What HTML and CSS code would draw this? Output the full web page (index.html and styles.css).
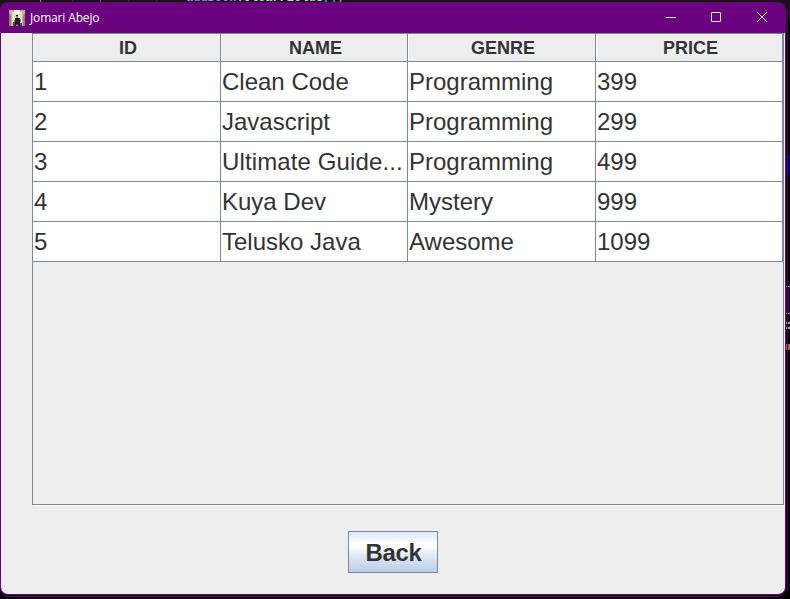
FILE: index.html
```html
<!DOCTYPE html>
<html lang="en">
<head>
<meta charset="utf-8">
<title>Jomari Abejo</title>
<link rel="stylesheet" href="styles.css">
</head>
<body>
<div class="backdrop">
  <div class="code-line"><span class="obj">addBook</span><span class="call">.clearFields</span><span class="paren">()</span><span class="semi">;</span></div>
  <i class="guide g1"></i><i class="guide g2"></i><i class="guide g3"></i><i class="guide g4"></i><i class="guide g5"></i>
</div>
<svg class="edge" width="5" height="599" viewBox="0 0 5 599" shape-rendering="crispEdges">
  <path fill="#000" d="M0 20h5v579H0z"/>
  <path fill="#00006b" d="M1 155h1v20H1zM3 155h2v20H3z"/>
  <path fill="#2a1038" d="M1 287h1v26H1zM3 287h2v26H3z"/>
  <path fill="#aaa" d="M1 286h1v1H1zM3 286h2v1H3zM1 313h1v1H1zM3 313h2v1H3zM1 322h1v2H1zM3 322h2v2H3zM1 327h1v2H1zM3 327h2v2H3z"/>
  <path fill="#b87018" d="M1 344h1v6H1zM3 344h2v6H3z"/>
  <path fill="#4a005a" d="M2 10h1v581H2z"/>
</svg>
<main class="window">
  <header class="titlebar">
    <svg class="app-icon" width="16" height="16" viewBox="0 0 16 16">
      <path fill="#c4b49c" d="M0 0h16v16H0z"/>
      <path fill="#e6dbc6" d="M3 2h10v11H3z"/>
      <path fill="#fff8e8" d="M5 0h6l-1 4H6z"/>
      <path fill="#94806a" d="M0 3l2 2v11H0zM15 4h1v12h-2V6z"/>
      <path fill="#a98468" d="M7 6h2v2H7zM5 10h1v2H5zM11 9h1v3h-1z"/>
      <path fill="#171923" d="M7 5h2v1H7zM6 8h5v5l1 3H9l-1-2-1 2H5l1-3z"/>
      <path fill="#5f4535" d="M4 12h2v4H4zM11 13h2v3h-2z"/>
    </svg>
    <h1>Jomari Abejo</h1>
    <svg class="controls" width="104" height="12" viewBox="0 0 104 12" fill="none" stroke="#fff">
      <path d="M1 6.5h10"/><rect x="46.5" y="1.5" width="9" height="9" rx=".5"/><path d="M92 1l10 10M102 1L92 11"/>
    </svg>
  </header>
  <section class="content">
    <div class="scrollpane">
      <table>
        <thead><tr><th>ID</th><th>NAME</th><th>GENRE</th><th>PRICE</th></tr></thead>
        <tbody>
          <tr><td>1</td><td>Clean Code</td><td>Programming</td><td>399</td></tr>
          <tr><td>2</td><td>Javascript</td><td>Programming</td><td>299</td></tr>
          <tr><td>3</td><td class="long">Ultimate Guide...</td><td>Programming</td><td>499</td></tr>
          <tr><td>4</td><td>Kuya Dev</td><td>Mystery</td><td>999</td></tr>
          <tr><td>5</td><td>Telusko Java</td><td>Awesome</td><td>1099</td></tr>
        </tbody>
      </table>
    </div>
    <button class="back" type="button">Back</button>
  </section>
</main>
</body>
</html>
```
FILE: styles.css
```css
* { box-sizing: border-box; }
html, body { margin: 0; height: 100%; overflow: hidden; }
body {
  display: flow-root;
  position: relative;
  background: #000;
  font-family: "Liberation Sans", Arial, sans-serif;
  color: #333;
}
.backdrop { position: absolute; inset: 0 0 auto; height: 20px; background: #141414; }
.code-line { position: absolute; left: 186px; top: -9px; font: bold 12px/14px "Liberation Mono", monospace; white-space: pre; }
.obj { color: #9a86d8; }
.call { color: #ccc; }
.paren { color: #2f9bd8; }
.semi { color: #d08030; }
.guide { position: absolute; top: 0; width: 1px; height: 2px; background: #333; }
.g1 { left: 40px; background: #888; }
.g2 { left: 72px; }
.g3 { left: 100px; background: #234a70; }
.g4 { left: 128px; }
.g5 { left: 156px; }
.edge { position: absolute; left: 785px; top: 0; }
.window {
  position: relative;
  width: 786px;
  height: 593px;
  margin-top: 2px;
  padding: 0 1px 1px;
  background: #6b0080;
  border-radius: 8px;
  overflow: hidden;
  box-shadow: 0 1px #000, 0 2px #5a006b;
}
.titlebar { display: flex; align-items: center; height: 31px; padding: 0 16px 0 8px; color: #fff; }
.app-icon { margin-right: 5px; }
h1 { margin: 0; flex: 1; font: 12px/16px "Open Sans", "Noto Sans", sans-serif; letter-spacing: -.15px; }
.controls { flex: none; margin-top: -1px; }
.content {
  display: flex;
  flex-direction: column;
  align-items: center;
  height: 561px;
  padding-left: 31px;
  background: #eee;
  border-radius: 0 0 7px 7px;
}
.scrollpane {
  align-self: stretch;
  height: 472px;
  border: 1px solid #7a8a99;
  box-shadow: 1px 1px #fff;
  flex: none;
  width: 752px;
}
table { width: 750px; border-collapse: separate; border-spacing: 0; table-layout: fixed; }
th, td { padding: 0; border: solid #7a8a99; border-width: 0 1px 1px 0; white-space: nowrap; }
th:nth-child(1), th:nth-child(3) { width: 188px; }
th:nth-child(2), th:nth-child(4) { width: 187px; }
th { height: 28px; padding: 1px 0 0 3px; font-size: 18px; line-height: 20px; background: #eee; box-shadow: inset 1px 1px #fff; }
td { height: 40px; padding-left: 1px; font-size: 24px; line-height: 28px; background: #fff; }
.long { letter-spacing: .12px; }
.back {
  width: 90px;
  height: 42px;
  margin: 26px 31px 0 0;
  padding: 2px 0 0 1px;
  border: 1px solid #7a8a99;
  background: linear-gradient(#dde8f3 0, #fff 30%, #fff 36%, #dde8f3 60%, #b8cfe5 100%);
  color: #333;
  font: bold 24px/28px "Liberation Sans", Arial, sans-serif;
  letter-spacing: -.4px;
}
```
